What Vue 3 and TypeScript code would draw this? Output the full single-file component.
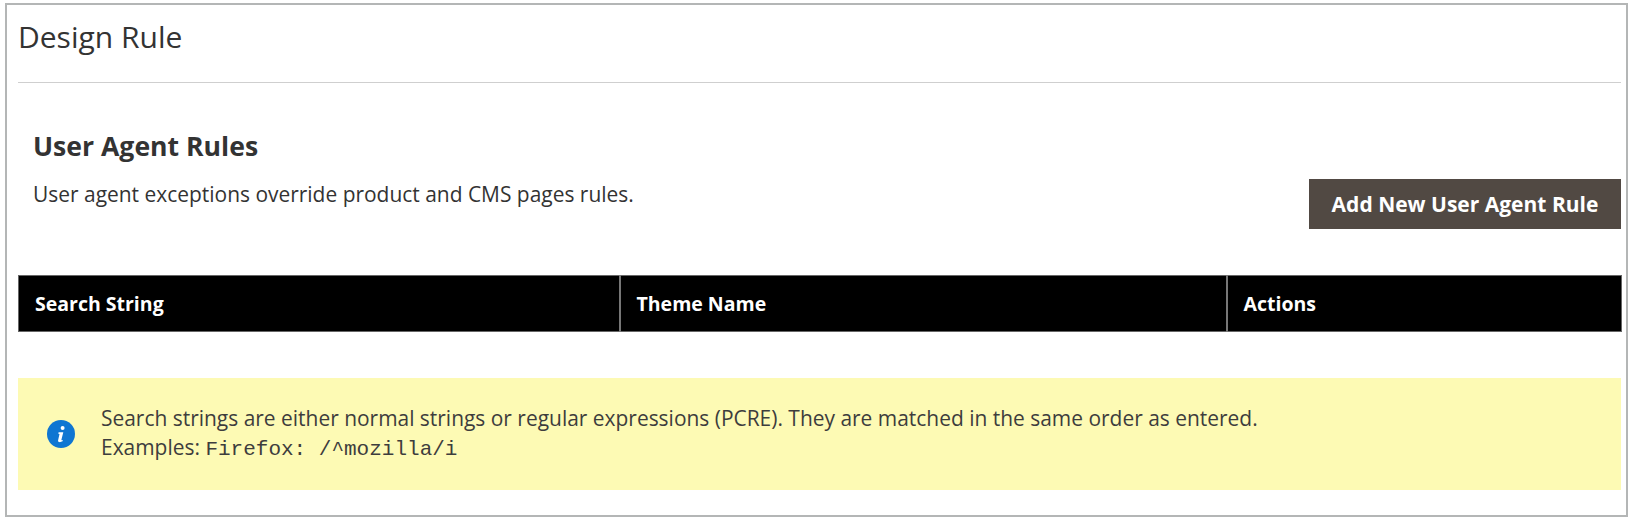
<template>
  <div class="page">
    <div class="panel">
      <h1 class="panel-title">Design Rule</h1>
      <div class="section-head">
        <div class="section-copy">
          <h2 class="section-title">User Agent Rules</h2>
          <p class="section-desc">User agent exceptions override product and CMS pages rules.</p>
        </div>
        <button class="add-btn" type="button">Add New User Agent Rule</button>
      </div>
      <table class="rules">
        <thead>
          <tr>
            <th v-for="col in columns" :key="col.label" :style="{ width: col.width + 'px' }">{{ col.label }}</th>
          </tr>
        </thead>
      </table>
      <div class="notice">
        <svg class="notice-icon" viewBox="0 0 28 28" aria-hidden="true">
          <circle cx="14" cy="14" r="14" fill="#0f76d2" />
          <circle cx="15.6" cy="7.9" r="2" fill="#fff" />
          <path d="M11.6 12.2h4.7l-1.9 7.6c-.1.5.3.6 1.5.1l-.3 1.4c-1.2.6-2.5 1-3.4.8-1-.2-1.3-.9-1.1-1.8l1.4-6.2-1.2-.3z" fill="#fff" />
        </svg>
        <div class="notice-text">
          <div>Search strings are either normal strings or regular expressions (PCRE). They are matched in the same order as entered.</div>
          <div>Examples: <code>Firefox: /^mozilla/i</code></div>
        </div>
      </div>
    </div>
  </div>
</template>

<script setup lang="ts">
const columns = [
  { label: 'Search String', width: 601 },
  { label: 'Theme Name', width: 607 },
  { label: 'Actions', width: 395 }
]
</script>

<style>
html,
body {
  margin: 0;
  background: #fff;
}
</style>

<style scoped>
.page {
  width: 1642px;
  height: 523px;
  box-sizing: border-box;
  padding: 3px 14px 6px 5px;
  background: #fff;
  font-family: "Open Sans", "Noto Sans", sans-serif;
  overflow: hidden;
}

.panel {
  height: 100%;
  box-sizing: border-box;
  border: 2px solid #b4b6b6;
  padding: 0 5px 0 11px;
}

.panel-title {
  margin: 0;
  height: 78px;
  box-sizing: border-box;
  padding: 13px 0 0 0;
  border-bottom: 1px solid #cfcfcf;
  font-size: 30px;
  font-weight: 400;
  line-height: 38px;
  color: #333;
}

.section-head {
  display: flex;
  justify-content: space-between;
  align-items: flex-end;
  padding: 47px 0 0 15px;
  height: 146px;
  box-sizing: border-box;
}

.section-title {
  margin: 0;
  font-size: 26.6px;
  line-height: 32px;
  font-weight: 700;
  color: #333;
}

.section-desc {
  margin: 20px 0 23px;
  font-size: 20.94px;
  line-height: 24px;
  color: #333;
}

.add-btn {
  height: 50px;
  width: 312px;
  border: 0;
  background: #514943;
  color: #fff;
  font-family: inherit;
  font-size: 21px;
  font-weight: 700;
}

.rules {
  margin-top: 46px;
  width: 100%;
  border-collapse: collapse;
  table-layout: fixed;
}

.rules th {
  height: 56px;
  box-sizing: border-box;
  padding: 0 16px;
  background: #000;
  border: 1px solid #666;
  color: #fff;
  font-size: 19.5px;
  font-weight: 700;
  text-align: left;
}

.rules th + th {
  border-left: 2px solid #777;
}

.notice {
  display: flex;
  align-items: center;
  gap: 26px;
  margin-top: 46px;
  height: 112px;
  padding-left: 29px;
  background: #fdfab4;
}

.notice-icon {
  width: 28px;
  height: 28px;
  flex: none;
}

.notice-text {
  font-size: 20.94px;
  line-height: 29px;
  color: #3d3d3d;
}

.notice-text code {
  font-family: "Liberation Mono", monospace;
  font-size: 21px;
}
</style>
